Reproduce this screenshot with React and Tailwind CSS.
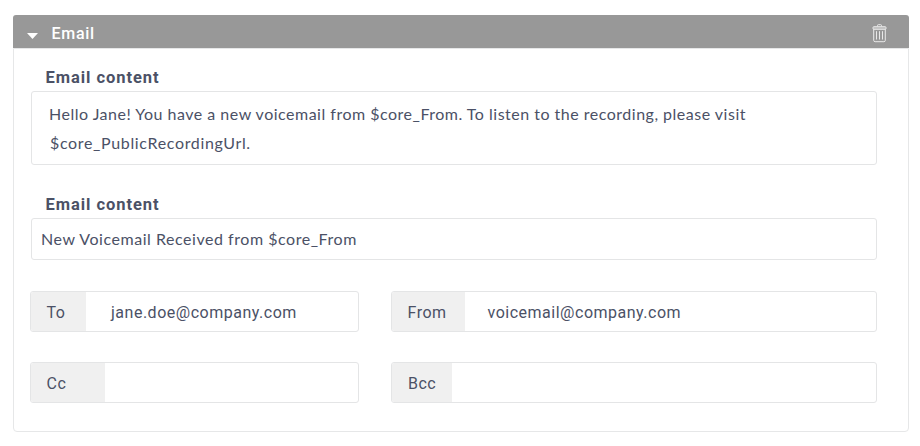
function TrashIcon() {
  return (
    <svg width="16" height="20" viewBox="0 0 16 20" fill="none" stroke="#e9e9e9" strokeWidth="1">
      <path d="M5.5 2.5V1.5a.8.8 0 0 1 .8-.8h2.4a.8.8 0 0 1 .8.8v1" />
      <rect x="1" y="2.7" width="13" height="2.6" rx="0.8" fill="#bcbcbc" />
      <path d="M1.7 5.1V16.3a1.4 1.4 0 0 0 1.4 1.4h8.8a1.4 1.4 0 0 0 1.4-1.4V5.1" />
      <path d="M4.5 7.2v8.3M7.5 7.2v8.3M10.5 7.2v8.3" />
    </svg>
  );
}

function Field({ label, labelClass, value, valueClass, className }) {
  return (
    <div className={`flex h-[41px] overflow-hidden rounded-[3px] border border-[#e4e5e6] tracking-[0.51px] ${className}`}>
      <div className={`flex items-center bg-[#f0f0f0] pt-[2px] ${labelClass}`}>{label}</div>
      <div className={`flex items-center pt-[2px] ${valueClass}`}>{value}</div>
    </div>
  );
}

export default function App() {
  return (
    <main className="h-[446px] w-[920px] bg-white pl-[13px] pt-[15px] font-['Roboto',sans-serif] text-[16px] leading-[20px] tracking-[0.8px] text-[#4b5166]">
      <header className="flex h-[33px] w-[896px] items-center rounded-t-[3px] bg-[#989898] pl-[14px] pr-[21px] font-medium text-white">
        <svg width="11" height="6" viewBox="0 0 11 6" className="mt-[9px]">
          <path d="M0 0h11L5.5 6z" fill="white" />
        </svg>
        <span className="ml-[13.5px] mt-[5px] tracking-[0.7px]">Email</span>
        <span className="ml-auto mt-[4px]">
          <TrashIcon />
        </span>
      </header>
      <section className="h-[384px] w-[896px] rounded-b-[4px] border border-[#e6e7e8] pl-[17px] pt-[19px]">
        <h2 className="pl-[14.5px] text-[16.5px] font-bold tracking-[0.95px]">Email content</h2>
        <div className="mt-[3px] h-[74px] w-[846px] rounded-[3px] border border-[#e4e5e6] pl-[17px] pt-[8px] font-['Lato',sans-serif] leading-[28px] tracking-[0.5px]">
          <p>Hello Jane! You have a new voicemail from $core_From. To listen to the recording, please visit</p>
          <p className="pl-px pt-px tracking-[0.65px]">$core_PublicRecordingUrl.</p>
        </div>
        <h2 className="mt-[30px] pl-[14.5px] text-[16.5px] font-bold tracking-[0.95px]">Email content</h2>
        <div className="mt-[3px] flex h-[42px] w-[846px] items-center rounded-[3px] border border-[#e4e5e6] pl-[9px] font-['Lato',sans-serif] tracking-[0.54px]">
          New Voicemail Received from $core_From
        </div>
        <div className="mt-[31px] flex gap-[32px]">
          <Field className="-ml-px w-[329px]" label="To" labelClass="w-[55px] pl-[15.5px]" value="jane.doe@company.com" valueClass="pl-[25px]" />
          <Field className="w-[486px]" label="From" labelClass="w-[73px] pl-[15.5px]" value="voicemail@company.com" valueClass="pl-[22.5px]" />
        </div>
        <div className="mt-[30px] flex gap-[32px]">
          <Field className="-ml-px w-[329px]" label="Cc" labelClass="w-[74px] pl-[15.5px]" value="" valueClass="" />
          <Field className="w-[486px]" label="Bcc" labelClass="w-[60px] pl-[16px]" value="" valueClass="" />
        </div>
      </section>
    </main>
  );
}
